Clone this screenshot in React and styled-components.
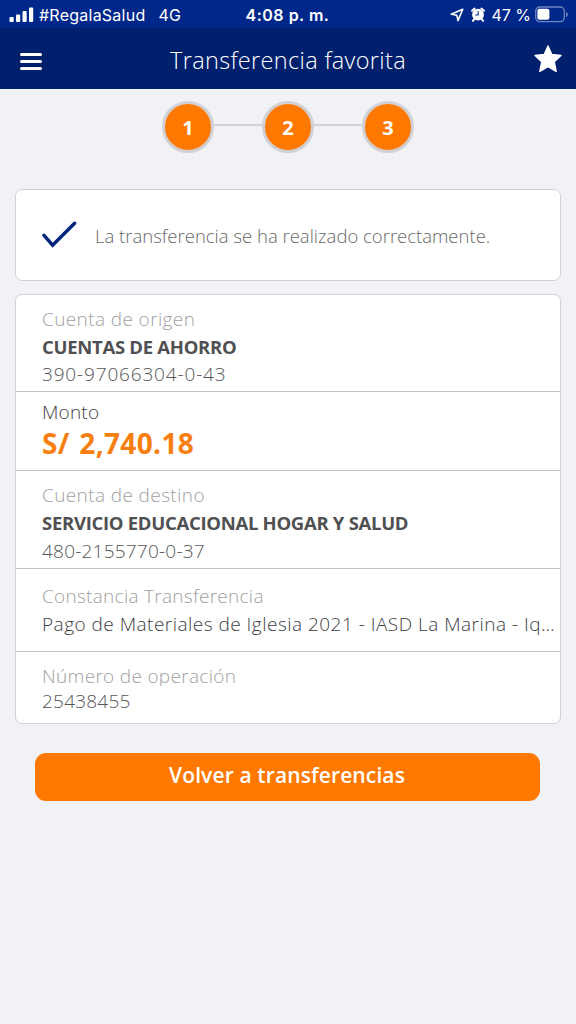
import styled, { createGlobalStyle } from 'styled-components';

const App = () => {
  return (
    <>
      <GlobalStyle />
      <Screen>
        <StatusBar>
          <StatusSide>
            <SignalIcon />
            <StatusText $spacing={0.24} $left={5}>#RegalaSalud</StatusText>
            <StatusText $spacing={0.2} $left={13}>4G</StatusText>
          </StatusSide>
          <Clock>4:08 p. m.</Clock>
          <StatusSide $end>
            <LocationIcon />
            <AlarmIcon />
            <StatusText $left={6}>47 %</StatusText>
            <BatteryIcon />
          </StatusSide>
        </StatusBar>
        <Header>
          <MenuButton aria-label="Menú">
            <span />
            <span />
            <span />
          </MenuButton>
          <Title>Transferencia favorita</Title>
          <StarIcon />
        </Header>
        <Steps>
          <Step>1</Step>
          <StepLine />
          <Step>2</Step>
          <StepLine />
          <Step>3</Step>
        </Steps>
        <MessageCard>
          <CheckIcon />
          <Message>La transferencia se ha realizado correctamente.</Message>
        </MessageCard>
        <DetailCard>
          <Section $height={96} $top={9}>
            <Label $spacing={0.39}>Cuenta de origen</Label>
            <AccountName>CUENTAS DE AHORRO</AccountName>
            <Value $height={27} $spacing={0.84}>390-97066304-0-43</Value>
          </Section>
          <Section $height={79} $top={5}>
            <Value $dark $height={30} $spacing={0.2}>Monto</Value>
            <Amount>S/ 2,740.18</Amount>
          </Section>
          <Section $height={98} $top={10}>
            <Label $spacing={0.39}>Cuenta de destino</Label>
            <AccountName>SERVICIO EDUCACIONAL HOGAR Y SALUD</AccountName>
            <Value $spacing={0.22}>480-2155770-0-37</Value>
          </Section>
          <Section $height={83} $top={13}>
            <Label $spacing={0.28}>Constancia Transferencia</Label>
            <Value $dark $spacing={0.48}>Pago de Materiales de Iglesia 2021 - IASD La Marina - Iq…</Value>
          </Section>
          <Section $height={71} $top={11}>
            <Label $height={26} $spacing={0.31}>Número de operación</Label>
            <Value $height={24} $spacing={0.22}>25438455</Value>
          </Section>
        </DetailCard>
        <BackButton>Volver a transferencias</BackButton>
      </Screen>
    </>
  );
};

export default App;

const SignalIcon = () => (
  <svg width="25" height="15" viewBox="0 0 25 15" fill="#fff">
    <rect x="0.5" y="10" width="4.2" height="5" rx="1" />
    <rect x="7" y="7.5" width="4.2" height="7.5" rx="1" />
    <rect x="13.5" y="4" width="4.2" height="11" rx="1" />
    <rect x="20" y="0.5" width="4.2" height="14.5" rx="1" />
  </svg>
);

const LocationIcon = () => (
  <svg width="14" height="14" viewBox="0 0 14 14" fill="none" stroke="#fff" strokeWidth="1.6" strokeLinejoin="round">
    <path d="M12.8 1.2 1.2 6.2 6.8 7.2 8 12.6Z" />
  </svg>
);

const AlarmIcon = () => (
  <svg width="14" height="15" viewBox="0 0 14 15" style={{ marginLeft: 7 }}>
    <circle cx="7" cy="7.7" r="5.9" fill="#fff" />
    <path d="M1.1 3.8 3.6 1.6M12.9 3.8 10.4 1.6M3.2 12.2 1.9 13.8M10.8 12.2 12.1 13.8" stroke="#fff" strokeWidth="2" strokeLinecap="round" />
    <path d="M7.2 4.3V8H4.3" fill="none" stroke="#00288a" strokeWidth="1.1" />
  </svg>
);

const BatteryIcon = () => (
  <svg width="34" height="17" viewBox="0 0 34 17" style={{ marginLeft: 4 }}>
    <rect x="0.7" y="1" width="28.6" height="14.6" rx="4" fill="none" stroke="#6f85c0" strokeWidth="1.3" />
    <rect x="2.4" y="2.8" width="12" height="11" rx="2.2" fill="#fff" />
    <path d="M31 6v5c1.2-.4 1.9-1.4 1.9-2.5S32.2 6.4 31 6Z" fill="#6f85c0" />
  </svg>
);

const StarIcon = () => (
  <svg width="28" height="28" viewBox="0 0 28 28" fill="#fff" stroke="#fff" strokeWidth="1.4" strokeLinejoin="round">
    <path d="M14 1 17.8 9.5 27 10.5 20.2 16.7 22.2 26.3 14 21.6 5.8 26.3 7.8 16.7 1 10.5 10.2 9.5Z" />
  </svg>
);

const CheckIcon = () => (
  <svg width="36" height="28" viewBox="0 0 36 28" fill="none" stroke="#04237f" strokeWidth="3.4" strokeLinecap="round">
    <path d="M3 14.3 11.6 24.2 33.6 2.2" />
  </svg>
);

const GlobalStyle = createGlobalStyle`
  * {
    box-sizing: border-box;
  }

  body {
    margin: 0;
    background: #f0f2f6;
    font-family: 'Open Sans', sans-serif;
  }
`;

const Screen = styled.div`
  width: 576px;
  height: 1024px;
  display: flex;
  flex-direction: column;
  background: #f0f2f6;
`;

const StatusBar = styled.div`
  height: 28px;
  padding: 1px 7px 0 9px;
  display: grid;
  grid-template-columns: 1fr auto 1fr;
  align-items: center;
  background: #00288a;
  color: #fff;
  font-family: Inter, sans-serif;
`;

const StatusSide = styled.div`
  display: flex;
  align-items: center;
  justify-content: ${(props) => (props.$end ? 'flex-end' : 'flex-start')};
`;

const StatusText = styled.span`
  margin-left: ${(props) => props.$left}px;
  font-size: 16px;
  line-height: 20px;
  letter-spacing: ${(props) => props.$spacing || 0}px;
  white-space: nowrap;
`;

const Clock = styled.span`
  margin-right: 3px;
  font-size: 16px;
  font-weight: 600;
  line-height: 20px;
  letter-spacing: 0.5px;
`;

const Header = styled.header`
  height: 61px;
  padding: 0 14px 0 20px;
  display: flex;
  align-items: center;
  justify-content: space-between;
  background: #00206e;
  color: #fff;
`;

const MenuButton = styled.button`
  width: 22px;
  height: 17px;
  margin-top: 5px;
  padding: 0;
  display: flex;
  flex-direction: column;
  justify-content: space-between;
  border: 0;
  background: none;

  span {
    height: 3px;
    border-radius: 1.5px;
    background: #fff;
  }
`;

const Title = styled.h1`
  margin: 2px 0 0;
  font-size: 23.5px;
  font-weight: 300;
  line-height: 32px;
  letter-spacing: 0.34px;
`;

const Steps = styled.div`
  height: 76px;
  display: flex;
  align-items: center;
  justify-content: center;
`;

const Step = styled.div`
  width: 52px;
  height: 52px;
  border: 3px solid #d2d0d4;
  border-radius: 50%;
  background: #ff7800;
  color: #fff;
  font-size: 20px;
  font-weight: 700;
  line-height: 48px;
  text-align: center;
`;

const StepLine = styled.div`
  width: 48px;
  height: 2px;
  margin-bottom: 4px;
  background: #d0d1d4;
`;

const Card = styled.section`
  margin: 0 15px;
  border: 1.5px solid #d0d2d7;
  border-radius: 7px;
  background: #fff;
`;

const MessageCard = styled(Card)`
  height: 92px;
  margin-top: 24px;
  padding-left: 25px;
  display: flex;
  align-items: center;
  gap: 18px;
`;

const Message = styled.p`
  margin: 2px 0 0;
  color: #686868;
  font-size: 18.5px;
  font-weight: 300;
  line-height: 28px;
  white-space: nowrap;
`;

const DetailCard = styled(Card)`
  margin-top: 13px;
  padding-top: 1px;
`;

const Section = styled.div`
  height: ${(props) => props.$height}px;
  padding: ${(props) => props.$top}px 0 0 26px;
  border-bottom: 1px solid #bfc1c4;

  &:last-child {
    border-bottom: 0;
  }
`;

const Line = styled.div`
  height: ${(props) => props.$height || 28}px;
  font-size: 19px;
  font-weight: 300;
  line-height: ${(props) => props.$height || 28}px;
  letter-spacing: ${(props) => props.$spacing || 0}px;
  white-space: nowrap;
`;

// descenders get cut just under the baseline
const Label = styled(Line)`
  color: #a0a0a0;
  clip-path: inset(0 0 3px);
`;

const Value = styled(Line)`
  color: ${(props) => (props.$dark ? '#404042' : '#565658')};
`;

const AccountName = styled(Line)`
  color: #505052;
  font-size: 18.5px;
  font-weight: 700;
  letter-spacing: -0.29px;
`;

const Amount = styled(Line)`
  height: 34px;
  color: #f77f11;
  font-size: 28px;
  font-weight: 700;
  line-height: 33px;
  letter-spacing: 0.35px;
  word-spacing: 2px;
`;

const BackButton = styled.button`
  height: 48px;
  margin: 29px 36px 0 35px;
  padding: 0 1px 4px 0;
  border: 0;
  border-radius: 11px;
  background: #ff7800;
  color: #fff;
  font-family: inherit;
  font-size: 21px;
  font-weight: 600;
  letter-spacing: 0.12px;
`;
